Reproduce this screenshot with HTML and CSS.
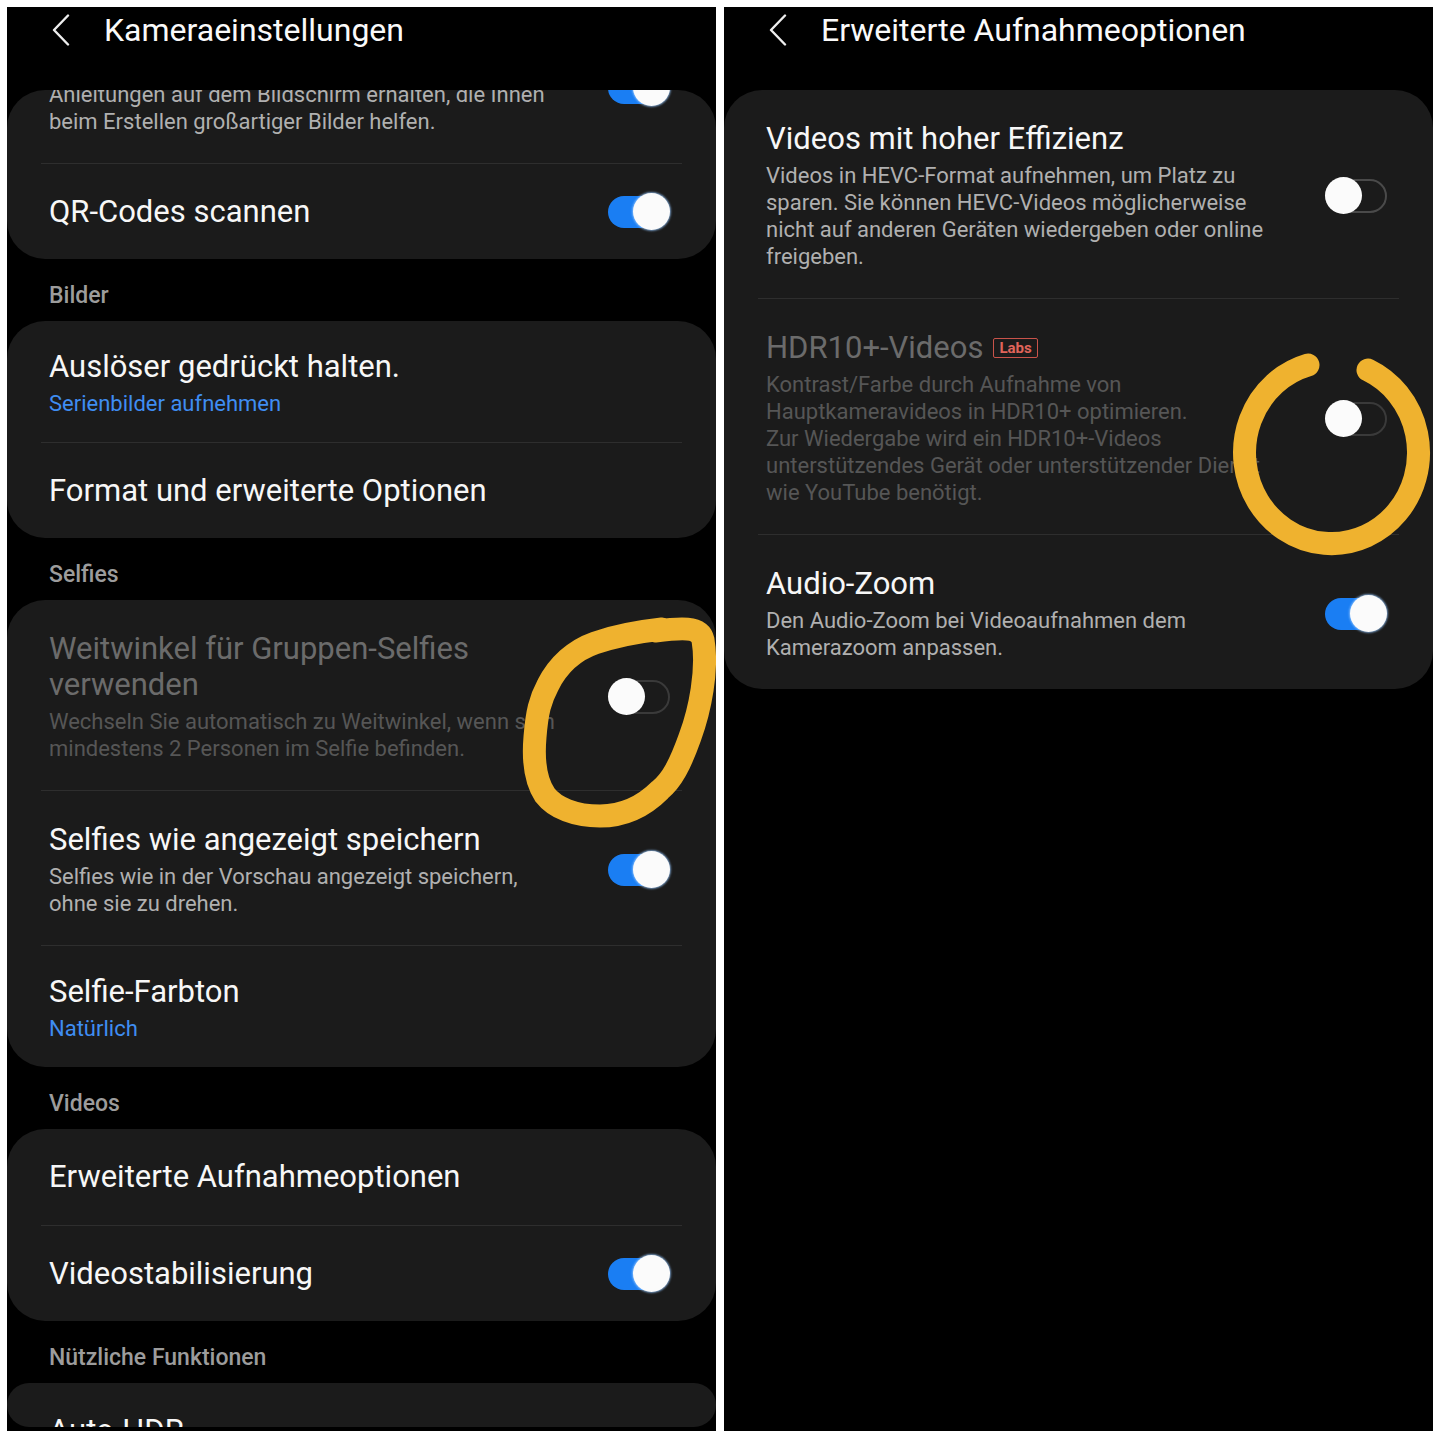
FILE: index.html
```html
<!DOCTYPE html>
<html lang="de">
<head>
    <meta charset="UTF-8">
    <meta name="viewport" content="width=device-width, initial-scale=1.0">
    <title>Kameraeinstellungen</title>
    <link rel="stylesheet" href="styles.css">
</head>
<body>
    <div class="collage">

        <!-- linke Aufnahme: Kameraeinstellungen -->
        <section class="phone">
            <header class="bar">
                <svg class="back" viewBox="0 0 18 32"><path d="M16 1.5 L2 16 L16 30.5"/></svg>
                <h1>Kameraeinstellungen</h1>
            </header>

            <div class="card scrolled">
                <div class="row tall">
                    <div class="text">
                        <div class="title">Aufnahmevorschläge</div>
                        <div class="sub">Anleitungen auf dem Bildschirm erhalten, die Ihnen beim Erstellen großartiger Bilder helfen.</div>
                    </div>
                    <span class="switch on"></span>
                </div>
                <div class="row">
                    <div class="text"><div class="title">QR-Codes scannen</div></div>
                    <span class="switch on"></span>
                </div>
            </div>

            <h2 class="group">Bilder</h2>
            <div class="card">
                <div class="row two">
                    <div class="text">
                        <div class="title">Auslöser gedrückt halten.</div>
                        <div class="sub link">Serienbilder aufnehmen</div>
                    </div>
                </div>
                <div class="row">
                    <div class="text"><div class="title">Format und erweiterte Optionen</div></div>
                </div>
            </div>

            <h2 class="group">Selfies</h2>
            <div class="card">
                <div class="row tall dim">
                    <div class="text">
                        <div class="title">Weitwinkel für Gruppen-Selfies verwenden</div>
                        <div class="sub">Wechseln Sie automatisch zu Weitwinkel, wenn sich mindestens 2 Personen im Selfie befinden.</div>
                    </div>
                    <span class="switch"></span>
                </div>
                <div class="row tall">
                    <div class="text">
                        <div class="title">Selfies wie angezeigt speichern</div>
                        <div class="sub">Selfies wie in der Vorschau angezeigt speichern, ohne sie zu drehen.</div>
                    </div>
                    <span class="switch on"></span>
                </div>
                <div class="row two">
                    <div class="text">
                        <div class="title">Selfie-Farbton</div>
                        <div class="sub link">Natürlich</div>
                    </div>
                </div>
            </div>

            <h2 class="group">Videos</h2>
            <div class="card">
                <div class="row">
                    <div class="text"><div class="title">Erweiterte Aufnahmeoptionen</div></div>
                </div>
                <div class="row">
                    <div class="text"><div class="title">Videostabilisierung</div></div>
                    <span class="switch on"></span>
                </div>
            </div>

            <h2 class="group">Nützliche Funktionen</h2>
            <div class="card cut">
                <div class="row">
                    <div class="text"><div class="title">Auto-HDR</div></div>
                </div>
            </div>

            <svg class="mark" viewBox="7 7 709 1424">
                <path d="M655 631 C680 628 700 626 703 640 C708 670 700 710 690 737 C680 765 672 780 660 790 C640 810 620 816 600 816 C575 816 555 808 545 795 C535 780 533 760 535 737 C537 712 540 700 548 685 C558 665 575 650 595 643 C615 636 635 632 662 629"/>
            </svg>
        </section>

        <!-- rechte Aufnahme: Erweiterte Aufnahmeoptionen -->
        <section class="phone">
            <header class="bar">
                <svg class="back" viewBox="0 0 18 32"><path d="M16 1.5 L2 16 L16 30.5"/></svg>
                <h1>Erweiterte Aufnahmeoptionen</h1>
            </header>

            <div class="card">
                <div class="row tall">
                    <div class="text">
                        <div class="title">Videos mit hoher Effizienz</div>
                        <div class="sub">Videos in HEVC-Format aufnehmen, um Platz zu sparen. Sie können HEVC-Videos möglicherweise nicht auf anderen Geräten wiedergeben oder online freigeben.</div>
                    </div>
                    <span class="switch"></span>
                </div>
                <div class="row tall dim">
                    <div class="text">
                        <div class="title">HDR10+-Videos <span class="labs">Labs</span></div>
                        <div class="sub">Kontrast/Farbe durch Aufnahme von Hauptkameravideos in HDR10+ optimieren.<br>Zur Wiedergabe wird ein HDR10+-Videos unterstützendes Gerät oder unterstützender Dienst wie YouTube benötigt.</div>
                    </div>
                    <span class="switch"></span>
                </div>
                <div class="row tall">
                    <div class="text">
                        <div class="title">Audio-Zoom</div>
                        <div class="sub">Den Audio-Zoom bei Videoaufnahmen dem Kamerazoom anpassen.</div>
                    </div>
                    <span class="switch on"></span>
                </div>
            </div>

            <svg class="mark" viewBox="724 7 709 1424">
                <path d="M1308 365 A87 91 0 1 0 1368 370"/>
            </svg>
        </section>

    </div>
</body>
</html>
```

FILE: styles.css
```css
body{
    margin: 0;
    background: #fff;
    font-family: Roboto, "Noto Sans", sans-serif;
}

.collage{
    display: flex;
    gap: 8px;
    padding: 7px;
}

.phone{
    position: relative;
    width: 709px;
    height: 1424px;
    flex: none;
    background: #000;
    color: #f7f7f7;
    overflow: hidden;
}

/* kopfzeile */
.bar{
    display: flex;
    align-items: center;
    height: 46px;
    padding-left: 45px;
    margin-bottom: 37px;
}

.back{
    width: 18px;
    height: 32px;
    margin-right: 34px;
    flex: none;
}

.back path{
    fill: none;
    stroke: #eeeeee;
    stroke-width: 2.4;
    stroke-linecap: round;
    stroke-linejoin: round;
}

.bar h1{
    margin: 0;
    font-size: 32px;
    font-weight: 400;
    line-height: 38px;
    color: #fafafa;
}

/* gruppen + karten */
.group{
    margin: 0;
    padding: 24px 0 12px 42px;
    font-size: 23px;
    font-weight: 500;
    line-height: 26px;
    color: #9c9c9c;
}

.card{
    background: #1b1b1b;
    border-radius: 38px;
    padding: 0 34px;
    overflow: hidden;
}

.card.scrolled .row:first-child{
    margin-top: -81px;
}

.card.cut{
    height: 44px;
}

.row{
    display: flex;
    align-items: center;
    justify-content: space-between;
    box-sizing: border-box;
    min-height: 96px;
    padding: 0 12px 0 8px;
    border-top: 1px solid #2e2e2e;
}

.row:first-child{
    border-top: none;
}

.row.two{
    padding-top: 28px;
    padding-bottom: 25px;
}

.row.tall{
    padding-top: 31px;
    padding-bottom: 28px;
}

.text{
    max-width: 515px;
}

.title{
    display: flex;
    align-items: center;
    flex-wrap: wrap;
    font-size: 31px;
    line-height: 36px;
    color: #f7f7f7;
}

.sub{
    margin-top: 5px;
    font-size: 22px;
    line-height: 27px;
    color: #b0b0b0;
}

.sub.link{
    color: #3f8df2;
}

.dim .title{
    color: #6b6b6b;
}

.dim .sub{
    color: #565656;
}

.labs{
    margin-left: 10px;
    padding: 0 5px;
    border: 1.5px solid #c9534a;
    border-radius: 2px;
    font-size: 15px;
    font-weight: 700;
    line-height: 18px;
    color: #e0645a;
}

/* schalter */
.switch{
    position: relative;
    width: 62px;
    height: 37px;
    flex: none;
}

.switch::before{
    content: "";
    position: absolute;
    left: 0;
    top: 2px;
    width: 62px;
    height: 34px;
    box-sizing: border-box;
    border: 2px solid #4a4a4a;
    border-radius: 17px;
}

.dim .switch::before{
    border-color: #3a3a3a;
}

.switch::after{
    content: "";
    position: absolute;
    left: 0;
    top: 0;
    width: 37px;
    height: 37px;
    border-radius: 50%;
    background: #fbfbfb;
}

.switch.on::before{
    top: 3px;
    width: 58px;
    height: 32px;
    border: none;
    border-radius: 16px;
    background: #1a7ef3;
}

.switch.on::after{
    left: auto;
    right: 0;
    box-shadow: 0 0 2px 1px rgba(150, 200, 255, .7);
}

/* markierungen */
.mark{
    position: absolute;
    left: 0;
    top: 0;
    width: 100%;
    height: 100%;
    pointer-events: none;
}

.mark path{
    fill: none;
    stroke: #efb22f;
    stroke-width: 23;
    stroke-linecap: round;
    stroke-linejoin: round;
}
```
